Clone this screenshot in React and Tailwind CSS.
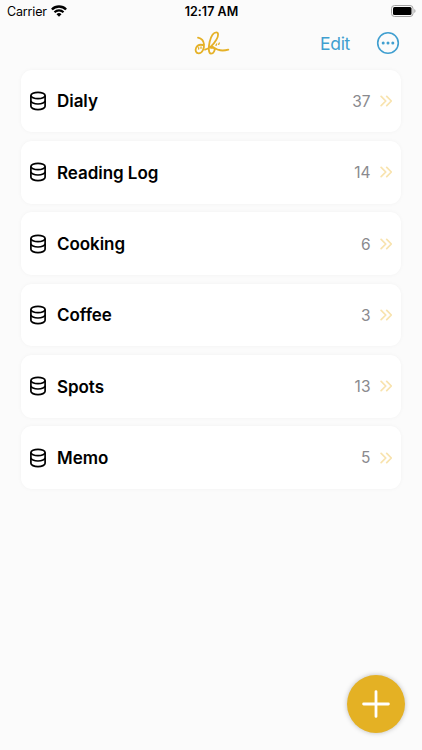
import React from "react";

const folders = [
  { name: "Dialy", count: 37 },
  { name: "Reading Log", count: 14 },
  { name: "Cooking", count: 6 },
  { name: "Coffee", count: 3 },
  { name: "Spots", count: 13 },
  { name: "Memo", count: 5 },
];

function StatusBar() {
  return (
    <div className="grid grid-cols-3 items-center h-[22px] pl-[7px] pr-[6px] text-black">
      <div className="flex items-center gap-[4px]">
        <span className="pt-px text-[12.5px] leading-[21px] tracking-[-0.15px]">Carrier</span>
        <svg width="16" height="12" viewBox="0 0 16 12" fill="none" stroke="currentColor">
          <path d="M.9 4.5a10 10 0 0 1 14.2 0" strokeWidth="2.4" />
          <path d="M3.5 7.2a6.4 6.4 0 0 1 9 0" strokeWidth="2.2" />
          <path d="M8 11.8 5.5 9.3a3.5 3.5 0 0 1 5 0z" fill="currentColor" stroke="none" />
        </svg>
      </div>
      <span className="pt-px text-center text-[12.5px] leading-[21px] font-semibold tracking-[0.05px]">
        12:17 AM
      </span>
      <svg className="justify-self-end" width="25" height="12" viewBox="0 0 25 12">
        <rect x="0.5" y="0.5" width="21.5" height="11" rx="3" fill="none" stroke="#a3a3a3" />
        <rect x="2" y="2" width="18.5" height="8" rx="1.5" />
        <path d="M23.3 4v4c1.6-.7 1.6-3.3 0-4z" fill="#a3a3a3" />
      </svg>
    </div>
  );
}

function Logo() {
  return (
    <svg
      width="36"
      height="26"
      viewBox="104 91 108 78"
      fill="none"
      stroke="#e5b127"
      strokeWidth="5.4"
      strokeLinecap="round"
      strokeLinejoin="round"
    >
      <path d="M116 114c9 2 17 9 18 20 1 12-5 27-16 27-8 0-11-8-8-16 3-7 11-11 20-9" />
      <path d="M137 150c11-3 25-15 34-30 8-13 6-22 0-22-8 0-16 12-20 28-4 17-4 35 4 36 8 0 13-11 10-17-3-5-8-4-10 0 8-3 14 2 21 5 10 4 20 3 31 0" />
      <path d="M118 144v4M125 142v4M172 133l-2 4M180 130l-2 4" strokeWidth="4" />
    </svg>
  );
}

function Header() {
  return (
    <header className="grid grid-cols-[1fr_auto_1fr] items-center h-[42px] pl-[24px] pr-[22px]">
      <div></div>
      <Logo />
      <div className="flex items-center justify-end gap-[26px] text-[#409fd0]">
        <button className="pt-px text-[17.5px] leading-6 tracking-[-0.3px]">Edit</button>
        <svg width="24" height="24" viewBox="0 0 24 24" fill="none" stroke="currentColor">
          <circle cx="12" cy="12" r="10.3" strokeWidth="1.6" />
          <g fill="currentColor" stroke="none">
            <circle cx="7.2" cy="12" r="1.5" />
            <circle cx="12" cy="12" r="1.5" />
            <circle cx="16.8" cy="12" r="1.5" />
          </g>
        </svg>
      </div>
    </header>
  );
}

function FolderRow({ name, count }) {
  return (
    <li className="flex items-center h-[62.8px] pl-[8px] pr-[9px] rounded-[11px] bg-white shadow-[0_0_4px_rgba(0,0,0,0.04)]">
      <svg
        width="18"
        height="20"
        viewBox="0 0 18 20"
        fill="none"
        stroke="#000"
        strokeWidth="1.7"
      >
        <ellipse cx="9" cy="4.5" rx="7.1" ry="3.2" />
        <path d="M1.9 4.5v10.8c0 1.8 3.2 3.3 7.1 3.3s7.1-1.5 7.1-3.3V4.5" />
        <path d="M1.9 9.8c0 1.8 3.2 3.2 7.1 3.2s7.1-1.4 7.1-3.2" />
      </svg>
      <span className="ml-[10px] pt-[2px] flex-1 text-[17px] font-semibold tracking-[-0.05px] text-black">
        {name}
      </span>
      <span className="pt-px text-[15.5px] text-[#8a8a8e]">{count}</span>
      <svg
        className="ml-[9px]"
        width="12.5"
        height="12"
        viewBox="0 0 13 12"
        fill="none"
        stroke="#f8e3ae"
        strokeWidth="1.8"
        strokeLinecap="round"
        strokeLinejoin="round"
      >
        <path d="M1.2 1.2 6 6l-4.8 4.8M7 1.2 11.8 6 7 10.8" />
      </svg>
    </li>
  );
}

function App() {
  return (
    <div className="flex flex-col h-[750px] w-full overflow-hidden bg-[#fbfbfb] font-['Inter',sans-serif]">
      <StatusBar />
      <Header />
      <main className="flex-1 px-[21px] pt-[5.7px]">
        <ul className="flex flex-col gap-[8.5px]">
          {folders.map((folder) => (
            <FolderRow key={folder.name} name={folder.name} count={folder.count} />
          ))}
        </ul>
      </main>
      <button
        aria-label="Add"
        className="absolute left-[347px] top-[675px] flex items-center justify-center size-[58px] rounded-full bg-[#e4b124] shadow-[0_0_5px_rgba(0,0,0,0.25)]"
      >
        <svg width="28" height="28" viewBox="0 0 28 28" stroke="#fff" strokeWidth="2.8" strokeLinecap="round">
          <path d="M14 1.6v24.8M1.6 14h24.8" />
        </svg>
      </button>
    </div>
  );
}

export default App;
